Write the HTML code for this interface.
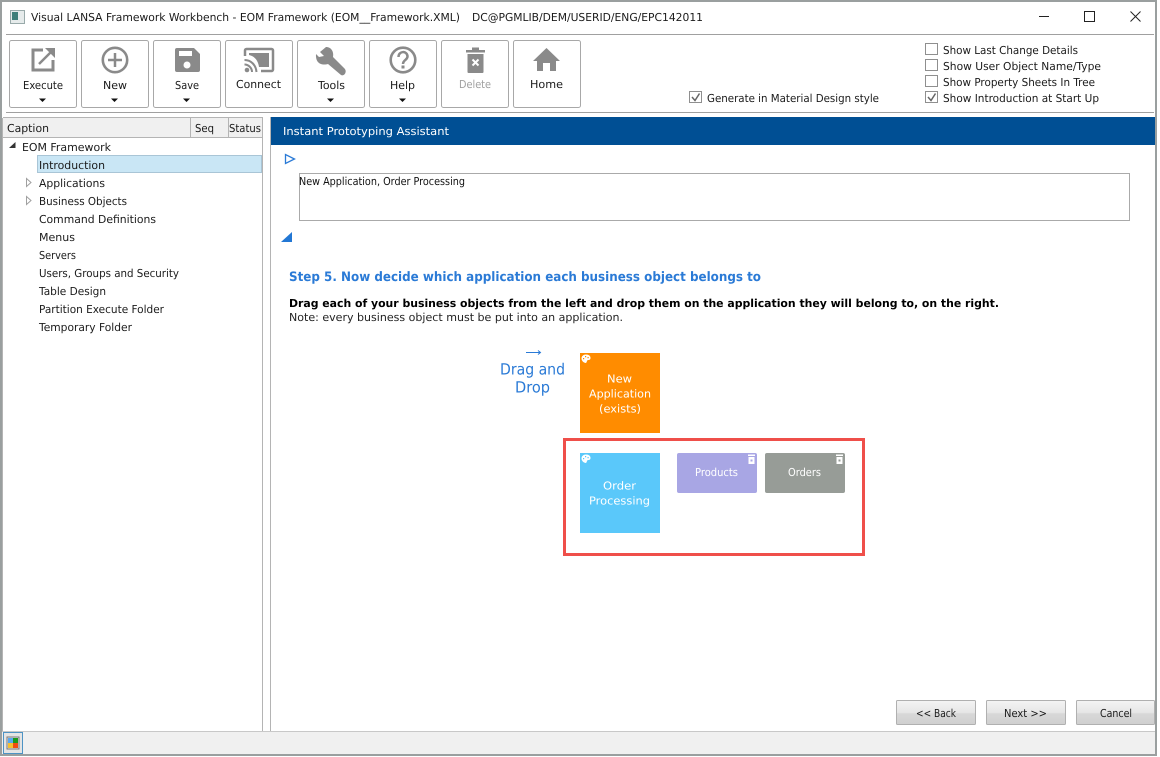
<!DOCTYPE html>
<html><head><meta charset="utf-8"><title>Visual LANSA Framework Workbench</title>
<style>
html,body{margin:0;padding:0;background:#fff;width:1160px;height:757px;overflow:hidden}
svg{display:block}
text{font-family:"DejaVu Sans",sans-serif;font-size:11px;fill:#1a1a1a;white-space:pre;text-rendering:geometricPrecision}
.i{fill:#8a8a8a}
.b{fill:#fff;stroke:#a8a8a8}
.c{fill:#fff;stroke:#8f8f8f}
.w{fill:#fff}
</style></head><body>
<svg width="1160" height="757" viewBox="0 0 1160 757" xmlns="http://www.w3.org/2000/svg">
<defs><linearGradient id="g" x1="0" y1="0" x2="0" y2="1"><stop offset="0" stop-color="#f4f4f4"/><stop offset=".5" stop-color="#e6e6e6"/><stop offset=".55" stop-color="#d8d8d8"/><stop offset="1" stop-color="#cfcfcf"/></linearGradient></defs>
<rect width="1160" height="757" fill="#fff"/>
<!-- window frame -->
<rect x="0" y="731" width="1157" height="24" fill="#f0f0f0"/>
<path d="M0 731.5H1156" stroke="#c8c8c8"/>
<rect x="1" y="1" width="1155" height="754" fill="none" stroke="#9a9f9f" stroke-width="2"/>
<!-- title bar -->
<rect x="10.500" y="10.500" width="14" height="13" fill="#e6ebeb" stroke="#9aa"/><rect x="12" y="12" width="6" height="8" fill="#3f7f7a"/>
<text x="31" y="21" textLength="429" lengthAdjust="spacingAndGlyphs">Visual LANSA Framework Workbench - EOM Framework (EOM__Framework.XML)</text>
<text x="472" y="21" textLength="231" lengthAdjust="spacingAndGlyphs">DC@PGMLIB/DEM/USERID/ENG/EPC142011</text>
<path d="M1039 16.500H1049" stroke="#222"/>
<rect x="1084.500" y="11.500" width="10" height="10" fill="none" stroke="#222"/>
<path d="M1130.500 11.500L1140.500 21.500M1140.500 11.500L1130.500 21.500" stroke="#222"/>
<path d="M6 34.500H1154M6 112.500H1154" stroke="#a0a0a0"/>
<!-- toolbar buttons -->
<rect class="b" x="9.500" y="40.500" width="67" height="67" rx="2"/>
<rect class="b" x="81.500" y="40.500" width="67" height="67" rx="2"/>
<rect class="b" x="153.500" y="40.500" width="67" height="67" rx="2"/>
<rect class="b" x="225.500" y="40.500" width="67" height="67" rx="2"/>
<rect class="b" x="297.500" y="40.500" width="67" height="67" rx="2"/>
<rect class="b" x="369.500" y="40.500" width="67" height="67" rx="2"/>
<rect class="b" x="441.500" y="40.500" width="67" height="67" rx="2"/>
<rect class="b" x="513.500" y="40.500" width="67" height="67" rx="2"/>
<!-- execute -->
<path d="M43 50H33V70H53V60" fill="none" stroke="#8a8a8a" stroke-width="3"/>
<path d="M39 64L51 52" fill="none" stroke="#8a8a8a" stroke-width="2.500"/>
<path d="M45 48H55V58L51.500 54.500L48.500 51.500Z" class="i"/>
<!-- new -->
<circle cx="115" cy="60" r="12.200" fill="none" stroke="#8a8a8a" stroke-width="2.600"/>
<path d="M115 53V67M108 60H122" stroke="#8a8a8a" stroke-width="2.500"/>
<!-- save -->
<path d="M177 48H194L200 54V70a2 2 0 0 1-2 2H177a2 2 0 0 1-2-2V50a2 2 0 0 1 2-2Z" class="i"/>
<rect x="179" y="51" width="13" height="5" fill="#fff"/><circle cx="187" cy="65" r="3.500" fill="#fff"/>
<!-- connect -->
<path d="M245 56V50.500a1.500 1.500 0 0 1 1.500-1.500H271.500a1.500 1.500 0 0 1 1.500 1.500V69.500a1.500 1.500 0 0 1-1.500 1.500H261" fill="none" stroke="#8a8a8a" stroke-width="2.500"/>
<path d="M249 53H269V67H259C258 60 254 56 249 55Z" class="i"/>
<path d="M244.500 60C251 60 256 65 256.500 72M244.500 64.500C248.500 64.500 252 68 252 72" fill="none" stroke="#8a8a8a" stroke-width="2"/>
<circle cx="247" cy="70" r="2.300" class="i"/>
<!-- tools -->
<path d="M326 47L320 52L324 56L319 57L316 54C315.500 60 318 64 323 64.500C325 64.600 326.500 64.500 328 64L341 75C343 76 345 74.500 345.500 72.500C346 71 345.500 69.500 344.500 68.500L333 57C334 52 331.500 47 326 47Z" class="i"/>
<!-- help -->
<circle cx="403" cy="60" r="12.300" fill="none" stroke="#8a8a8a" stroke-width="2.600"/>
<path d="M398.500 57C398.500 50.500 407.500 50.500 407.500 56.500C407.500 60 403 60 403 64" fill="none" stroke="#8a8a8a" stroke-width="2.500"/>
<rect x="401.500" y="65.500" width="3" height="3" class="i"/>
<!-- delete -->
<path d="M466 50H472V47.500H479V50H485V52.500H466ZM467.500 54H483.500V72a1 1 0 0 1-1 1H468.500a1 1 0 0 1-1-1Z" class="i"/>
<path d="M472.500 59.500L478.500 65.500M478.500 59.500L472.500 65.500" stroke="#fff" stroke-width="2"/>
<!-- home -->
<path d="M546.500 48L560 61H556V71H550V63H543V71H537V61H533Z" class="i"/>
<!-- labels -->
<text x="23" y="89" textLength="40" lengthAdjust="spacingAndGlyphs">Execute</text>
<text x="103" y="89" textLength="24" lengthAdjust="spacingAndGlyphs">New</text>
<text x="175" y="89" textLength="24" lengthAdjust="spacingAndGlyphs">Save</text>
<text x="236" y="88" textLength="45" lengthAdjust="spacingAndGlyphs">Connect</text>
<text x="318" y="89" textLength="27" lengthAdjust="spacingAndGlyphs">Tools</text>
<text x="390" y="89" textLength="25" lengthAdjust="spacingAndGlyphs">Help</text>
<text x="459" y="88" textLength="32" lengthAdjust="spacingAndGlyphs" style="fill:#a0a0a0">Delete</text>
<text x="530" y="88" textLength="33" lengthAdjust="spacingAndGlyphs">Home</text>
<path d="M39 98.500H46L42.500 102ZM111 98.500H118L114.500 102ZM183 98.500H190L186.500 102ZM327 98.500H334L330.500 102ZM399 98.500H406L402.500 102Z" fill="#111"/>
<!-- checkboxes -->
<rect class="c" x="925.500" y="43.500" width="12" height="11"/>
<rect class="c" x="925.500" y="59.500" width="12" height="11"/>
<rect class="c" x="925.500" y="75.500" width="12" height="11"/>
<rect class="c" x="925.500" y="91.500" width="12" height="11"/>
<rect class="c" x="689.500" y="91.500" width="12" height="11"/>
<path d="M928 97L931 100.500L935.500 93.500M692 97L695 100.500L699.500 93.500" fill="none" stroke="#666" stroke-width="1.500"/>
<text x="943" y="54" textLength="135" lengthAdjust="spacingAndGlyphs">Show Last Change Details</text>
<text x="943" y="70" textLength="158" lengthAdjust="spacingAndGlyphs">Show User Object Name/Type</text>
<text x="943" y="86" textLength="152" lengthAdjust="spacingAndGlyphs">Show Property Sheets In Tree</text>
<text x="943" y="102" textLength="156" lengthAdjust="spacingAndGlyphs">Show Introduction at Start Up</text>
<text x="707" y="102" textLength="172" lengthAdjust="spacingAndGlyphs">Generate in Material Design style</text>
<!-- left panel -->
<rect x="3" y="118" width="260" height="19" fill="#f0f0f0"/>
<path d="M3 117.500H263M3 137.500H263M190.500 118V137M228.500 118V137M262.500 118V731M270.500 117V731" stroke="#b4b4b4"/>
<path d="M2.500 118V731" stroke="#b4b4b4"/>
<text x="7" y="132" textLength="42" lengthAdjust="spacingAndGlyphs">Caption</text>
<text x="195" y="132" textLength="19" lengthAdjust="spacingAndGlyphs">Seq</text>
<text x="229" y="132" textLength="32" lengthAdjust="spacingAndGlyphs">Status</text>
<rect x="37.500" y="155.500" width="224" height="17" fill="#c9e6f5" stroke="#a9c5d6"/>
<path d="M9 148H15.500V142Z" fill="#333"/>
<path d="M26.500 178.500V186.500L31 182.500ZM26.500 196.500V204.500L31 200.500Z" fill="#fff" stroke="#a0a0a0"/>
<text x="22" y="151" textLength="89" lengthAdjust="spacingAndGlyphs">EOM Framework</text>
<text x="39" y="169" textLength="66" lengthAdjust="spacingAndGlyphs">Introduction</text>
<text x="39" y="187" textLength="66" lengthAdjust="spacingAndGlyphs">Applications</text>
<text x="39" y="205" textLength="88" lengthAdjust="spacingAndGlyphs">Business Objects</text>
<text x="39" y="223" textLength="117" lengthAdjust="spacingAndGlyphs">Command Definitions</text>
<text x="39" y="241" textLength="36" lengthAdjust="spacingAndGlyphs">Menus</text>
<text x="39" y="259" textLength="37" lengthAdjust="spacingAndGlyphs">Servers</text>
<text x="39" y="277" textLength="140" lengthAdjust="spacingAndGlyphs">Users, Groups and Security</text>
<text x="39" y="295" textLength="67" lengthAdjust="spacingAndGlyphs">Table Design</text>
<text x="39" y="313" textLength="125" lengthAdjust="spacingAndGlyphs">Partition Execute Folder</text>
<text x="39" y="331" textLength="93" lengthAdjust="spacingAndGlyphs">Temporary Folder</text>
<!-- right panel -->
<rect x="271" y="117" width="884" height="28" fill="#004f94"/>
<text x="283" y="135" textLength="166" lengthAdjust="spacingAndGlyphs" style="fill:#fff">Instant Prototyping Assistant</text>
<path d="M285.500 154.500V163.500L294.500 159Z" fill="#fff" stroke="#2a7ad6" stroke-width="1.300"/>
<path d="M281 242H292V232Z" fill="#2277d4"/>
<rect x="299.500" y="173.500" width="830" height="47" fill="#fff" stroke="#aaa"/>
<text x="299" y="185" textLength="166" lengthAdjust="spacingAndGlyphs" style="fill:#111">New Application, Order Processing</text>
<text x="289" y="281" textLength="472" lengthAdjust="spacingAndGlyphs" style="font-size:13px;font-weight:bold;fill:#2a7ad6">Step 5. Now decide which application each business object belongs to</text>
<text x="289" y="307" textLength="710" lengthAdjust="spacingAndGlyphs" style="font-weight:bold;fill:#000">Drag each of your business objects from the left and drop them on the application they will belong to, on the right.</text>
<text x="289" y="321" textLength="334" lengthAdjust="spacingAndGlyphs" style="fill:#222">Note: every business object must be put into an application.</text>
<!-- drag and drop -->
<path d="M526 352.500H540M538 350.500L540.500 352.500L538 354.500" fill="none" stroke="#2a7ad6"/>
<text x="500" y="374.500" textLength="65" lengthAdjust="spacingAndGlyphs" style="font-size:15.500px;fill:#2a7ad6">Drag and</text>
<text x="515" y="392.500" textLength="35" lengthAdjust="spacingAndGlyphs" style="font-size:15.500px;fill:#2a7ad6">Drop</text>
<rect x="580" y="353" width="80" height="80" fill="#ff8c00"/>
<text class="w" x="607" y="382.500" textLength="25" lengthAdjust="spacingAndGlyphs">New</text>
<text class="w" x="589" y="397.500" textLength="62" lengthAdjust="spacingAndGlyphs">Application</text>
<text class="w" x="599" y="412.500" textLength="42" lengthAdjust="spacingAndGlyphs">(exists)</text>
<rect x="564.500" y="439.500" width="299" height="115" fill="none" stroke="#ef4f4a" stroke-width="3"/>
<rect x="580" y="453" width="80" height="80" fill="#5ac8fa"/>
<text class="w" x="603" y="489.500" textLength="33" lengthAdjust="spacingAndGlyphs">Order</text>
<text class="w" x="589" y="504.500" textLength="61" lengthAdjust="spacingAndGlyphs">Processing</text>
<path d="M586 354.500C589 354.500 590.500 356 590.500 358C590.500 360 589 360 588 360C587 360 587 362 586 363C584 363 581.500 361 581.500 358.500C581.500 356 583.500 354.500 586 354.500Z" fill="#fff"/>
<path d="M583 358h1.200v1.200H583ZM585 356h1.200v1.200H585ZM587.500 357h1.200v1.200h-1.200Z" fill="#ff8c00"/>
<path d="M586 454.500C589 454.500 590.500 456 590.500 458C590.500 460 589 460 588 460C587 460 587 462 586 463C584 463 581.500 461 581.500 458.500C581.500 456 583.500 454.500 586 454.500Z" fill="#fff"/>
<path d="M583 458h1.200v1.200H583ZM585 456h1.200v1.200H585ZM587.500 457h1.200v1.200h-1.200Z" fill="#5ac8fa"/>
<rect x="677" y="453" width="80" height="40" rx="2" fill="#a8a6e4"/>
<rect x="765" y="453" width="80" height="40" rx="2" fill="#979c97"/>
<text class="w" x="695" y="476" textLength="43" lengthAdjust="spacingAndGlyphs">Products</text>
<text class="w" x="788" y="476" textLength="33" lengthAdjust="spacingAndGlyphs">Orders</text>
<path d="M748 454.500H755V456H748ZM748.500 457H754.500V464H748.500Z" fill="#fff"/><rect x="750.500" y="459.500" width="2" height="2" fill="#a8a6e4"/>
<path d="M836 454.500H843V456H836ZM836.500 457H842.500V464H836.500Z" fill="#fff"/><rect x="838.500" y="459.500" width="2" height="2" fill="#979c97"/>
<!-- bottom buttons -->
<rect x="896.500" y="700.500" width="79" height="24" rx="1" fill="url(#g)" stroke="#b0b0b0"/>
<rect x="986.500" y="700.500" width="79" height="24" rx="1" fill="url(#g)" stroke="#b0b0b0"/>
<rect x="1076.500" y="700.500" width="78" height="24" rx="1" fill="url(#g)" stroke="#b0b0b0"/>
<text x="916" y="717" textLength="40" lengthAdjust="spacingAndGlyphs">&lt;&lt; Back</text>
<text x="1004" y="717" textLength="43" lengthAdjust="spacingAndGlyphs">Next &gt;&gt;</text>
<text x="1100" y="717" textLength="32" lengthAdjust="spacingAndGlyphs">Cancel</text>
<!-- status button -->
<rect x="3.500" y="732.500" width="19" height="21" fill="#e4e4e4" stroke="#4d93c4"/>
<rect x="7" y="737" width="12" height="12" fill="none" stroke="#777"/>
<rect x="8" y="738" width="5" height="5" fill="#58a8f0"/><rect x="13" y="738" width="5" height="5" fill="#1a9a1a"/>
<rect x="8" y="743" width="5" height="5" fill="#f4c030"/><rect x="13" y="743" width="5" height="5" fill="#f04c10"/>
</svg>
</body></html>
